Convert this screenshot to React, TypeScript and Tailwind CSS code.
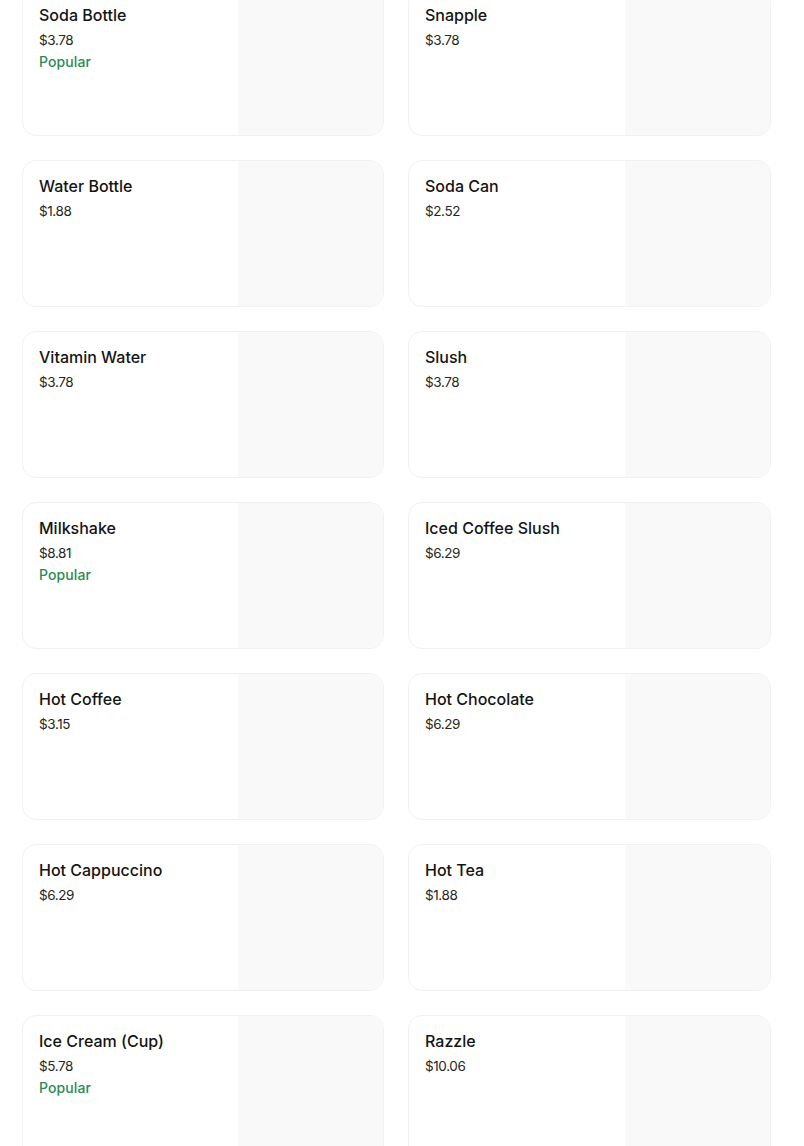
import React from 'react';

interface Item {
    name: string;
    price: string;
    popular?: boolean;
}

const items: Item[] = [
    { name: 'Soda Bottle', price: '$3.78', popular: true },
    { name: 'Snapple', price: '$3.78' },
    { name: 'Water Bottle', price: '$1.88' },
    { name: 'Soda Can', price: '$2.52' },
    { name: 'Vitamin Water', price: '$3.78' },
    { name: 'Slush', price: '$3.78' },
    { name: 'Milkshake', price: '$8.81', popular: true },
    { name: 'Iced Coffee Slush', price: '$6.29' },
    { name: 'Hot Coffee', price: '$3.15' },
    { name: 'Hot Chocolate', price: '$6.29' },
    { name: 'Hot Cappuccino', price: '$6.29' },
    { name: 'Hot Tea', price: '$1.88' },
    { name: 'Ice Cream (Cup)', price: '$5.78', popular: true },
    { name: 'Razzle', price: '$10.06' },
];

const ItemCard: React.FC<{ item: Item }> = ({ item }) => (
    <div className="flex h-[147px] overflow-hidden rounded-[14px] border border-[#f1f1f1] bg-white">
        <div className="flex-1 pl-4 pt-[15px]">
            <p className="text-[16px] leading-5 font-medium text-[#141414]">{item.name}</p>
            <p className="mt-[4px] text-[13.5px] leading-[22px] text-[#262626] tracking-[-0.4px]">{item.price}</p>
            {item.popular && (
                <p className="text-[14px] leading-[22px] font-medium text-[#2a8a55] tracking-[0.1px]">Popular</p>
            )}
        </div>
        <div className="w-[145px] shrink-0 bg-[#f9f9f9]" />
    </div>
);

export default function App() {
    return (
        <div className="h-[1146px] overflow-hidden bg-white" style={{ fontFamily: 'Inter, "Noto Sans", sans-serif' }}>
            <div className="mt-[-11px] grid grid-cols-[362px_363px] gap-x-6 gap-y-6 pl-[22px]">
                {items.map((item) => (
                    <ItemCard key={item.name} item={item} />
                ))}
            </div>
        </div>
    );
}
